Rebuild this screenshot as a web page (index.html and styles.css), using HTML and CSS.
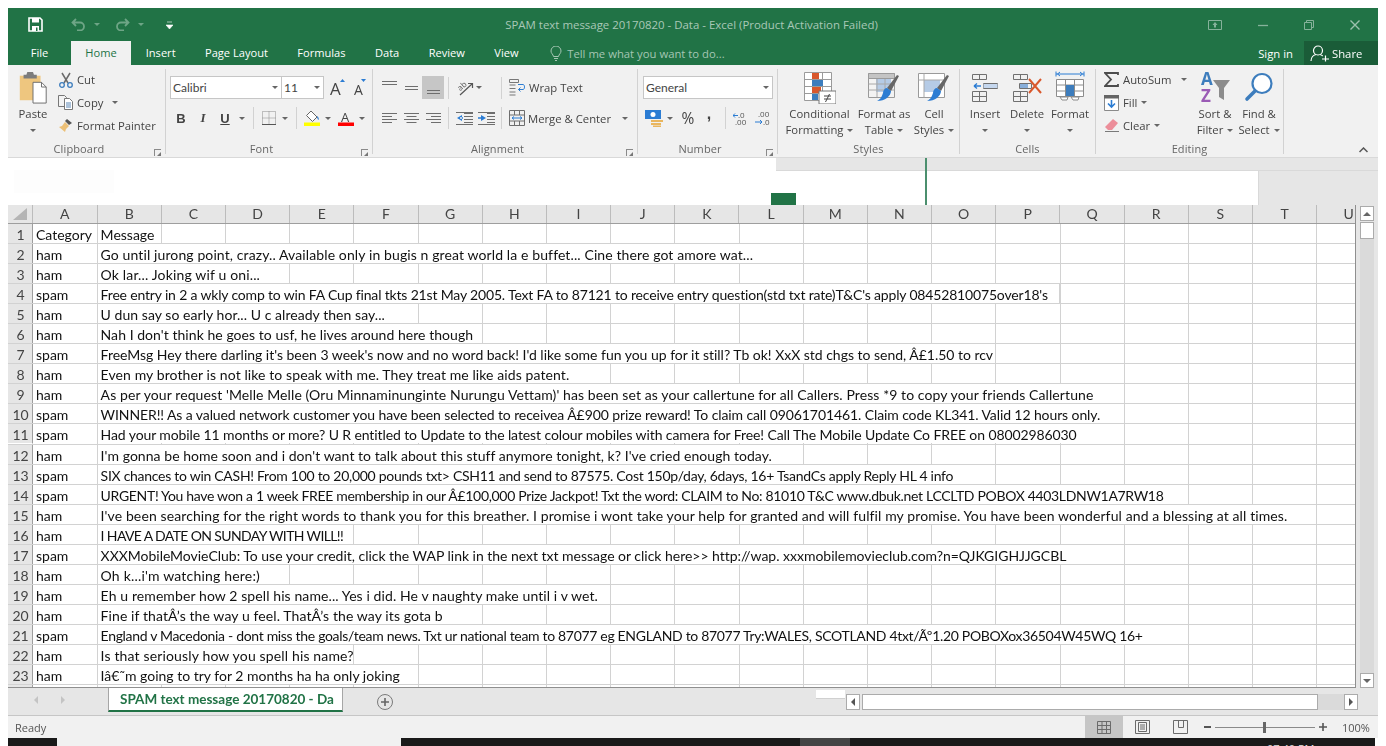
FILE: index.html
```html
<!DOCTYPE html>
<html lang="en">
<head>
<meta charset="utf-8">
<title>SPAM text message 20170820 - Data - Excel</title>
<link rel="stylesheet" href="styles.css">
</head>
<body>
<div class="win">
  <header class="titlebar">
    <div class="qat">
      <svg class="q-save" width="15" height="15" viewBox="0 0 15 15"><path d="M1 1h11l2 2v11H1z" fill="none" stroke="#fff" stroke-width="1.6"/><path d="M4 1h7v4.5H4zM4 9h7v5H4z" fill="#fff"/><path d="M8 10.5h1.5V14H8z" fill="#217346"/></svg>
      <svg class="q-undo" width="15" height="13" viewBox="0 0 15 13"><path d="M5 1 1.5 4.5 5 8M2 4.500h7a4 4 0 0 1 0 8H6" fill="none" stroke="#6ea586" stroke-width="1.800"/></svg>
      <i class="qcar"></i>
      <svg class="q-redo" width="15" height="13" viewBox="0 0 15 13"><path d="M10 1l3.500 3.500L10 8M13 4.500H6a4 4 0 0 0 0 8h3" fill="none" stroke="#6ea586" stroke-width="1.800"/></svg>
      <i class="qcar"></i>
      <svg class="q-cust" width="7" height="8" viewBox="0 0 7 8"><path d="M1 1h5M0 4h7L3.500 8z" fill="#fff" stroke="#fff" stroke-width=".6"/></svg>
    </div>
    <div class="doc-title">SPAM text message 20170820 - Data - Excel (Product Activation Failed)</div>
    <div class="winctl">
      <svg width="14" height="10" viewBox="0 0 14 10"><path d="M.5.500h13v9H.5z" fill="none" stroke="#86b29b"/><path d="M7 2 4.500 5h5zM6 5h2v2.500H6z" fill="#86b29b"/></svg>
      <svg width="10" height="10" viewBox="0 0 10 10"><path d="M0 5.500h10" stroke="#86b29b" stroke-width="1.300"/></svg>
      <svg width="10" height="10" viewBox="0 0 10 10"><path d="M.5 2.500h7v7h-7zM2.500 2.500v-2h7v7h-2" fill="none" stroke="#86b29b"/></svg>
      <svg width="10" height="10" viewBox="0 0 10 10"><path d="M.5.500l9 9M9.500.500l-9 9" stroke="#9cc1ad" stroke-width="1.400"/></svg>
    </div>
  </header>

  <nav class="tabs">
    <span class="tab tab-file">File</span>
    <span class="tab tab-on">Home</span>
    <span class="tab">Insert</span>
    <span class="tab">Page Layout</span>
    <span class="tab">Formulas</span>
    <span class="tab">Data</span>
    <span class="tab">Review</span>
    <span class="tab">View</span>
    <span class="tellme">
      <svg width="12" height="15" viewBox="0 0 12 15"><path d="M3.500 10.500C3 8 1 7.500 1 5a5 5 0 0 1 10 0c0 2.500-2 3-2.500 5.500zM4 12.500h4M5 14.500h2" fill="none" stroke="#a5c6b4"/></svg>
      Tell me what you want to do...
    </span>
    <span class="signin">Sign in</span>
    <span class="share">
      <svg width="20" height="17" viewBox="0 0 20 17"><circle cx="8" cy="5.500" r="4.500" fill="none" stroke="#fff" stroke-width="1.200"/><path d="M1 16c0-3.500 2.500-6 5-6.500M10 9.500c1 .3 2 .8 2.700 1.500M12 14h7M15.500 10.500v6" fill="none" stroke="#fff" stroke-width="1.200"/></svg>
      Share
    </span>
  </nav>

  <section class="ribbon">
    <div class="group g-clip">
      <div class="body flex">
        <div class="big paste">
          <svg width="30" height="35" viewBox="0 0 30 35"><path d="M1 5h22v26H1z" fill="#eec67f"/><path d="M5 4h3l1-3h6l1 3h3v4H5z" fill="#7c7c7c"/><path d="M15 12h9l5 5v17H15z" fill="#fff" stroke="#6a6a6a"/><path d="M24 12v5h5" fill="none" stroke="#6a6a6a"/></svg>
          <span class="big-t">Paste</span>
          <i class="car"></i>
        </div>
        <div class="stack">
          <div class="sm"><svg class="si" width="16" height="16" viewBox="0 0 16 16"><path d="M4 1l6 10M12 1 6 11" stroke="#6b6b6b" stroke-width="1.500"/><circle cx="4" cy="13" r="2.300" fill="none" stroke="#3d7dbd" stroke-width="1.300"/><circle cx="12" cy="13" r="2.300" fill="none" stroke="#3d7dbd" stroke-width="1.300"/></svg><span>Cut</span></div>
          <div class="sm"><svg class="si" width="16" height="15" viewBox="0 0 16 15"><path d="M.5.500h6l2 2v9h-8z" fill="#f3f3f3" stroke="#777"/><path d="M6.500 3.500h5l3 3v8h-8z" fill="#fff" stroke="#777"/><path d="M8 8h5M8 10h5M8 12h5" stroke="#5a86b5"/></svg><span>Copy</span><i class="car w24"></i></div>
          <div class="sm"><svg class="si" width="16" height="15" viewBox="0 0 16 15"><path d="M9 1l5 4-3 2-4-4z" fill="#555"/><path d="M7 4l4 4-3 3-1 3-6-5 3-1z" fill="#ecc077"/></svg><span>Format Painter</span></div>
        </div>
      </div>
      <div class="label lb-launch">Clipboard</div>
      <i class="launch"></i>
    </div>

    <div class="group g-font">
      <div class="body pt7">
        <div class="rw r1">
          <div class="combo c-font"><span>Calibri</span><i class="car"></i></div>
          <div class="combo c-size"><span>11</span><i class="car"></i></div>
          <svg class="ml6" width="16" height="17" viewBox="0 0 16 17"><text x="0" y="16" class="sv-a">A</text><path d="M10 3l2.500-3L15 3z" fill="#2b7cd3"/></svg>
          <svg class="ml8" width="13" height="17" viewBox="0 0 13 17"><text x="0" y="16" class="sv-b">A</text><path d="M7 0h5L9.500 3z" fill="#2b7cd3"/></svg>
        </div>
        <div class="rw r2 pl4">
          <b class="ib w22 b-t">B</b>
          <i class="ib w22 i-t">I</i>
          <u class="ib w22 b-t">U</u>
          <i class="car w12"></i>
          <i class="sep ml5"></i>
          <svg class="ml8" width="14" height="14" viewBox="0 0 14 14"><path d="M.5.500h13v13H.5zM7 .500v13M.5 7h13" fill="none" stroke="#8a8a8a" stroke-dasharray="1 1"/><path d="M0 13.500h14" stroke="#555"/></svg>
          <i class="car w18"></i>
          <i class="sep ml2"></i>
          <svg class="ml7" width="16" height="16" viewBox="0 0 16 16"><path d="M7 1l6 6-4.500 4.500-6-6z" fill="#fff" stroke="#666"/><path d="M13 6c2 1.500 2 3 1.500 4-.8-.5-1.500-2-1.500-4z" fill="#2b7cd3"/><path d="M0 12.500h16v3.500H0z" fill="#ff0"/></svg>
          <i class="car w16"></i>
          <svg class="ml2" width="16" height="16" viewBox="0 0 16 16"><text x="3" y="11.500" class="sv-c">A</text><path d="M0 12.500h16v3.500H0z" fill="#f00"/></svg>
          <i class="car w16"></i>
        </div>
      </div>
      <div class="label lb-launch">Font</div>
      <i class="launch"></i>
    </div>

    <div class="group g-align">
      <div class="body pt7">
        <div class="rw r1 pl5">
          <span class="ib w22"><svg width="15" height="15" viewBox="0 0 15 15"><path d="M0 1.500h15M0 4.500h15" stroke="#6e6e6e"/></svg></span>
          <span class="ib w22"><svg width="15" height="15" viewBox="0 0 15 15"><path d="M1 6.500h13M1 9.500h13" stroke="#6e6e6e"/></svg></span>
          <span class="ib w22 on"><svg width="15" height="15" viewBox="0 0 15 15"><path d="M1 10.500h13M1 13.500h13" stroke="#6e6e6e"/></svg></span>
          <i class="sep ml4"></i>
          <svg class="ml8" width="18" height="16" viewBox="0 0 18 16"><text x="1" y="9" class="sv-d" transform="rotate(-42 5 7)">ab</text><path d="M3 15 15 4M11 3.500l4.500 0 0 4.500" fill="none" stroke="#555" stroke-width="1.200"/></svg>
          <i class="car w7"></i>
          <i class="sep ml19"></i>
          <div class="cmd ml7"><svg width="17" height="17" viewBox="0 0 17 17"><path d="M.5.500h9v3h-9zM.5 6h6M.5 9.500h6M.5 13h6M.5 16h6" fill="none" stroke="#777"/><path d="M9 5.500h5c2 0 2 5 0 5H9.500M11.500 8.500l-2 2 2 2" fill="none" stroke="#2b7cd3"/></svg><span>Wrap Text</span></div>
        </div>
        <div class="rw r2 pl5">
          <span class="ib w22"><svg width="15" height="12" viewBox="0 0 15 12"><path d="M0 1.500h15M0 4.500h10M0 7.500h15M0 10.500h10" stroke="#6e6e6e"/></svg></span>
          <span class="ib w22"><svg width="15" height="12" viewBox="0 0 15 12"><path d="M0 1.500h15M2.500 4.500h10M0 7.500h15M2.500 10.500h10" stroke="#6e6e6e"/></svg></span>
          <span class="ib w22"><svg width="15" height="12" viewBox="0 0 15 12"><path d="M0 1.500h15M5 4.500h10M0 7.500h15M5 10.500h10" stroke="#6e6e6e"/></svg></span>
          <i class="sep ml4"></i>
          <svg class="ml7" width="17" height="13" viewBox="0 0 17 13"><path d="M8 1.500h9M8 4.500h9M8 7.500h9M8 10.500h9M0 12.500h17M0 .500h17" stroke="#6e6e6e"/><path d="M6 3 1 6l5 3zM4 5.200h3v1.600H4z" fill="#2b7cd3"/></svg>
          <svg class="ml5" width="17" height="13" viewBox="0 0 17 13"><path d="M9 1.500h8M9 4.500h8M9 7.500h8M9 10.500h8M0 12.500h17M0 .500h17" stroke="#6e6e6e"/><path d="M3 3l5 3-5 3zM0 5.200h4v1.600H0z" fill="#2b7cd3"/></svg>
          <i class="sep ml6"></i>
          <div class="cmd ml7"><svg width="16" height="16" viewBox="0 0 16 16"><path d="M.5.500h15v15H.5zM.5 5h15M.5 11h15M5.500.500V5M10.500.500V5M5.500 11v4.500M10.500 11v4.500" fill="none" stroke="#6e6e6e"/><path d="M3 8h10M3 8l2-1.500M3 8l2 1.500M13 8l-2-1.500M13 8l-2 1.500" stroke="#2b7cd3" fill="none"/></svg><span>Merge &amp; Center</span><i class="car w22"></i></div>
        </div>
      </div>
      <div class="label lb-launch">Alignment</div>
      <i class="launch"></i>
    </div>

    <div class="group g-num">
      <div class="body pt7">
        <div class="rw r1 pl5">
          <div class="combo c-num"><span>General</span><i class="car"></i></div>
        </div>
        <div class="rw r2 pl7">
          <svg width="18" height="17" viewBox="0 0 18 17"><path d="M0 0h16v9H0z" fill="#2b7cd3"/><circle cx="8" cy="4.500" r="2.500" fill="#fff"/><path d="M6 10h12v2H6zM6 13h10v2H6zM8 15.500h8v1.500H8z" fill="#e9b65f"/></svg>
          <i class="car w14"></i>
          <span class="ib w22 pct">%</span>
          <span class="ib w20 cma">,</span>
          <i class="sep ml6"></i>
          <svg class="ml7" width="17" height="15" viewBox="0 0 17 15"><text x="5" y="7" class="sv-e">.0</text><text x="2" y="14" class="sv-e">.00</text><path d="M0 4.500h5M2 2.500l-2 2 2 2" fill="none" stroke="#2b7cd3"/></svg>
          <svg class="ml5" width="17" height="15" viewBox="0 0 17 15"><text x="3" y="6" class="sv-e">.00</text><text x="8" y="14" class="sv-e">.0</text><path d="M0 11h7M5 9l2 2-2 2" fill="none" stroke="#2b7cd3"/></svg>
        </div>
      </div>
      <div class="label lb-launch">Number</div>
      <i class="launch"></i>
    </div>

    <div class="group g-styles">
      <div class="body flex pl4">
        <div class="big w75">
          <svg width="32" height="33" viewBox="0 0 32 33"><path d="M.5 1.500h27v28H.5zM9.500 1.500v28M18.500 1.500v28M.5 8.500h27M.5 15.500h27M.5 22.500h27" fill="#fff" stroke="#9a9a9a"/><path d="M8 2h7v6H8z" fill="#d9572b"/><path d="M8 9h11v6H8z" fill="#3d7dbd"/><path d="M8 16h9v6H8z" fill="#d9572b"/><path d="M8 23h6v6H8z" fill="#3d7dbd"/><path d="M15 20h17v13H15z" fill="#fff" stroke="#777"/><path d="M20 25h7M20 28h7M25.500 23l-4 8" stroke="#444"/></svg>
          <span class="big-t">Conditional<br>Formatting<i class="icar"></i></span>
        </div>
        <div class="big w54">
          <svg width="32" height="33" viewBox="0 0 32 33"><path d="M.5 2.500h26v24H.5z" fill="#f3f3f3" stroke="#9a9a9a"/><path d="M.5 2.500h26v5H.5z" fill="#c4c4c4" stroke="#9a9a9a"/><path d="M8 8h15v13H8z" fill="#b5cbe6"/><path d="M.5 13h26M.5 19h26M9 8v18M17 8v18" stroke="#a8a8a8" fill="none"/><path d="M31 5l-2-1-10 13 4 3z" fill="#666"/><path d="M19 17l4 3c0 5-6 10-14 10 4-2 5-5 6-8 0-3 2-5 4-5z" fill="#2b7cd3"/></svg>
          <span class="big-t">Format as<br>Table<i class="icar"></i></span>
        </div>
        <div class="big w46">
          <svg width="32" height="33" viewBox="0 0 32 33"><path d="M.5 2.500h26v24H.5z" fill="#fff" stroke="#9a9a9a"/><path d="M6 9h16v12H6z" fill="#b5cbe6"/><path d="M.5 9h26M6 2.500v24" stroke="#a8a8a8" fill="none"/><path d="M31 5l-2-1-10 13 4 3z" fill="#666"/><path d="M19 17l4 3c0 5-6 10-14 10 4-2 5-5 6-8 0-3 2-5 4-5z" fill="#2b7cd3"/></svg>
          <span class="big-t">Cell<br>Styles<i class="icar"></i></span>
        </div>
      </div>
      <div class="label">Styles</div>
    </div>

    <div class="group g-cells">
      <div class="body flex pl4">
        <div class="big w42">
          <svg width="28" height="33" viewBox="0 0 28 33"><path d="M1.500 3.500h14v5h-14zM8.500 3.500v5M12.500 12.500h14v5h-14zM19.500 12.500v5M1.500 20.500h14v10h-14zM1.500 25.500h14M8.500 20.500v10" fill="none" stroke="#707070"/><path d="M12.500 13h14v4h-14z" fill="#c5d7ee"/><path d="M3 15h7M3 15l3-2.500M3 15l3 2.500" fill="none" stroke="#2b7cd3" stroke-width="1.400"/></svg>
          <span class="big-t">Insert</span>
          <i class="car"></i>
        </div>
        <div class="big w42">
          <svg width="30" height="33" viewBox="0 0 30 33"><path d="M1.500 3.500h14v5h-14zM8.500 3.500v5M1.500 20.500h14v10h-14zM1.500 25.500h14M8.500 20.500v10M7.500 12.500h12v5h-12z" fill="none" stroke="#707070"/><path d="M8 13h8v4H8z" fill="#88aed9"/><path d="M17 8l12 14M29 8 17 22" stroke="#d9572b" stroke-width="2"/></svg>
          <span class="big-t">Delete</span>
          <i class="car"></i>
        </div>
        <div class="big w44">
          <svg width="30" height="33" viewBox="0 0 30 33"><path d="M1 3h28M1 .5v5M29 .5v5" stroke="#2b7cd3" fill="none"/><path d="M5 1l-2.500 2L5 5M25 1l2.500 2L25 5" fill="none" stroke="#2b7cd3"/><path d="M1.500 8.500h27v17h-27zM10.500 8.500v17M19.500 8.500v17M1.500 14h27M1.500 20h27" fill="#fff" stroke="#8c8c8c"/><path d="M11 14h8v11h-8z" fill="#3d7dbd"/><path d="M5 26h8l-1 3H7zM16 26h8l-1 3h-5z" fill="#fff" stroke="#8c8c8c"/></svg>
          <span class="big-t">Format</span>
          <i class="car"></i>
        </div>
      </div>
      <div class="label">Cells</div>
    </div>

    <div class="group g-edit">
      <div class="body flex pl8">
        <div class="stack w88">
          <div class="sm"><svg class="si2" width="15" height="15" viewBox="0 0 15 15"><path d="M14 3V1H1l6 6.500L1 14h13v-2" fill="none" stroke="#4d4d4d" stroke-width="1.800"/></svg><span>AutoSum</span><i class="car w26"></i></div>
          <div class="sm"><svg class="si2" width="15" height="16" viewBox="0 0 15 16"><path d="M.5.500h14v15H.5z" fill="#fff" stroke="#8a8a8a"/><path d="M0 0h15v3.500H0z" fill="#666"/><path d="M7.500 5v7M4 8.500l3.500 3.500L11 8.500" fill="none" stroke="#2b7cd3" stroke-width="1.600"/></svg><span>Fill</span><i class="icar"></i></div>
          <div class="sm"><svg class="si2" width="15" height="15" viewBox="0 0 15 15"><path d="M9 1l5 4-6 7H4L1 9z" fill="#ec8e9a"/><path d="M1 13.500h14" stroke="#7a7a7a"/></svg><span>Clear</span><i class="icar"></i></div>
        </div>
        <div class="big w46">
          <svg width="32" height="33" viewBox="0 0 32 33"><text x="2" y="14" class="sv-az1">A</text><text x="2" y="31" class="sv-az2">Z</text><path d="M14 9h17l-6 8v12l-5-3v-9z" fill="#8c8c8c"/></svg>
          <span class="big-t">Sort &amp;<br>Filter<i class="icar"></i></span>
        </div>
        <div class="big w42">
          <svg width="30" height="33" viewBox="0 0 30 33"><circle cx="18" cy="12.500" r="9.500" fill="#fff" stroke="#3d7dbd" stroke-width="2.200"/><path d="M11 20l-8 8" stroke="#3d7dbd" stroke-width="3.600" stroke-linecap="round"/></svg>
          <span class="big-t">Find &amp;<br>Select<i class="icar"></i></span>
        </div>
      </div>
      <div class="label">Editing</div>
    </div>
    <svg class="collapse" width="9" height="6" viewBox="0 0 9 6"><path d="M.5 5l4-4 4 4" fill="none" stroke="#555" stroke-width="1.500"/></svg>
  </section>

  <section class="fbar">
    <div class="fb-left"><i class="fb-ghost"></i></div>
    <div class="fb-right">
      <div class="fb-strip"></div>
      <div class="fb-low"><div class="fb-input"></div><div class="fb-end"></div></div>
    </div>
    <i class="fb-green"></i>
    <i class="fb-line"></i>
  </section>

  <section class="sheet">
    <div class="grid">
      <div class="hdr">
        <div class="corner"><svg width="16" height="14" viewBox="0 0 16 14"><path d="M15 1v12H1z" fill="#b5b5b5"/></svg></div>
        <div class="ch">A</div><div class="ch">B</div><div class="ch">C</div><div class="ch">D</div><div class="ch">E</div><div class="ch">F</div><div class="ch">G</div><div class="ch">H</div><div class="ch">I</div><div class="ch">J</div><div class="ch">K</div><div class="ch">L</div><div class="ch">M</div><div class="ch">N</div><div class="ch">O</div><div class="ch">P</div><div class="ch">Q</div><div class="ch">R</div><div class="ch">S</div><div class="ch">T</div><div class="ch">U</div>
      </div>
      <div class="row"><div class="rh">1</div><div class="c ca">Category</div><div class="c s1">Message</div></div>
      <div class="row"><div class="rh">2</div><div class="c ca">ham</div><div class="c s11 lp11">Go until jurong point, crazy.. Available only in bugis n great world la e buffet... Cine there got amore wat...</div></div>
      <div class="row"><div class="rh">3</div><div class="c ca">ham</div><div class="c s3 lp15">Ok lar... Joking wif u oni...</div></div>
      <div class="row"><div class="rh">4</div><div class="c ca">spam</div><div class="c s15 ln17">Free entry in 2 a wkly comp to win FA Cup final tkts 21st May 2005. Text FA to 87121 to receive entry question(std txt rate)T&amp;C's apply 08452810075over18's</div></div>
      <div class="row"><div class="rh">5</div><div class="c ca">ham</div><div class="c s5 lp05">U dun say so early hor... U c already then say...</div></div>
      <div class="row"><div class="rh">6</div><div class="c ca">ham</div><div class="c s6 lp05">Nah I don't think he goes to usf, he lives around here though</div></div>
      <div class="row"><div class="rh">7</div><div class="c ca">spam</div><div class="c s14 ln02">FreeMsg Hey there darling it's been 3 week's now and no word back! I'd like some fun you up for it still? Tb ok! XxX std chgs to send, Â£1.50 to rcv</div></div>
      <div class="row"><div class="rh">8</div><div class="c ca">ham</div><div class="c s8 lp09">Even my brother is not like to speak with me. They treat me like aids patent.</div></div>
      <div class="row"><div class="rh">9</div><div class="c ca">ham</div><div class="c s16 lp09">As per your request 'Melle Melle (Oru Minnaminunginte Nurungu Vettam)' has been set as your callertune for all Callers. Press *9 to copy your friends Callertune</div></div>
      <div class="row"><div class="rh">10</div><div class="c ca">spam</div><div class="c s16 ln10">WINNER!! As a valued network customer you have been selected to receivea Â£900 prize reward! To claim call 09061701461. Claim code KL341. Valid 12 hours only.</div></div>
      <div class="row"><div class="rh">11</div><div class="c ca">spam</div><div class="c s16 ln10">Had your mobile 11 months or more? U R entitled to Update to the latest colour mobiles with camera for Free! Call The Mobile Update Co FREE on 08002986030</div></div>
      <div class="row"><div class="rh">12</div><div class="c ca">ham</div><div class="c s11 lp05">I'm gonna be home soon and i don't want to talk about this stuff anymore tonight, k? I've cried enough today.</div></div>
      <div class="row"><div class="rh">13</div><div class="c ca">spam</div><div class="c s14 ln28">SIX chances to win CASH! From 100 to 20,000 pounds txt&gt; CSH11 and send to 87575. Cost 150p/day, 6days, 16+ TsandCs apply Reply HL 4 info</div></div>
      <div class="row"><div class="rh">14</div><div class="c ca">spam</div><div class="c s17 ln32">URGENT! You have won a 1 week FREE membership in our Â£100,000 Prize Jackpot! Txt the word: CLAIM to No: 81010 T&amp;C www.dbuk.net LCCLTD POBOX 4403LDNW1A7RW18</div></div>
      <div class="row"><div class="rh">15</div><div class="c ca">ham</div><div class="c s19 lp11">I've been searching for the right words to thank you for this breather. I promise i wont take your help for granted and will fulfil my promise. You have been wonderful and a blessing at all times.</div></div>
      <div class="row"><div class="rh">16</div><div class="c ca">ham</div><div class="c s4 ln63">I HAVE A DATE ON SUNDAY WITH WILL!!</div></div>
      <div class="row"><div class="rh">17</div><div class="c ca">spam</div><div class="c s16 ln02">XXXMobileMovieClub: To use your credit, click the WAP link in the next txt message or click here&gt;&gt; http://wap. xxxmobilemovieclub.com?n=QJKGIGHJJGCBL</div></div>
      <div class="row"><div class="rh">18</div><div class="c ca">ham</div><div class="c s3 lp19">Oh k...i'm watching here:)</div></div>
      <div class="row"><div class="rh">19</div><div class="c ca">ham</div><div class="c s8 lp09">Eh u remember how 2 spell his name... Yes i did. He v naughty make until i v wet.</div></div>
      <div class="row"><div class="rh">20</div><div class="c ca">ham</div><div class="c s6 lp09">Fine if thatÂ’s the way u feel. ThatÂ’s the way its gota b</div></div>
      <div class="row"><div class="rh">21</div><div class="c ca">spam</div><div class="c s17 ln32">England v Macedonia - dont miss the goals/team news. Txt ur national team to 87077 eg ENGLAND to 87077 Try:WALES, SCOTLAND 4txt/Ãº1.20 POBOXox36504W45WQ 16+</div></div>
      <div class="row"><div class="rh">22</div><div class="c ca">ham</div><div class="c s4 lp15">Is that seriously how you spell his name?</div></div>
      <div class="row"><div class="rh">23</div><div class="c ca">ham</div><div class="c s5">Iâ€˜m going to try for 2 months ha ha only joking</div></div>
      <div class="row"><div class="rh"></div><div class="c ca"></div></div>
    </div>
    <div class="vbar">
      <div class="sb-btn"><i class="tri-up"></i></div>
      <div class="sb-thumb"></div>
      <div class="sb-track"></div>
      <div class="sb-btn"><i class="tri-down"></i></div>
    </div>
  </section>

  <section class="sheettabs">
    <div class="nav-arrows"><i class="tri-l"></i><i class="tri-r"></i></div>
    <div class="stab">SPAM text message 20170820 - Da</div>
    <svg class="addsheet" width="18" height="18" viewBox="0 0 18 18"><circle cx="9" cy="9" r="7.500" fill="none" stroke="#7a7a7a"/><path d="M9 5v8M5 9h8" stroke="#666" stroke-width="1.600"/></svg>
    <div class="split"></div>
    <div class="hbar">
      <div class="sb-btn hb"><i class="tri-l2"></i></div>
      <div class="hthumb"></div>
      <div class="htrack"></div>
      <div class="sb-btn hb"><i class="tri-r2"></i></div>
    </div>
  </section>

  <footer class="status">
    <span class="ready">Ready</span>
    <div class="views">
      <span class="vw vw-on"><svg width="14" height="13" viewBox="0 0 14 13"><path d="M.5.500h13v12H.5zM.5 4.500h13M.5 8.500h13M5 .500v12M9.500.500v12" fill="none" stroke="#6b6b6b"/></svg></span>
      <span class="vw"><svg width="15" height="14" viewBox="0 0 15 14"><path d="M.5.500h14v13H.5z" fill="none" stroke="#6b6b6b"/><path d="M3.500 2.500h8v9h-8zM5 5h5M5 7h5M5 9h5" fill="none" stroke="#6b6b6b"/></svg></span>
      <span class="vw"><svg width="15" height="14" viewBox="0 0 15 14"><path d="M.5.500h14v13H.5zM5.500.500v7h5v-7" fill="none" stroke="#6b6b6b"/></svg></span>
    </div>
    <div class="zoomer">
      <i class="z-minus"></i>
      <div class="z-track"><i class="z-handle"></i></div>
      <svg width="8" height="8" viewBox="0 0 8 8"><path d="M0 4h8M4 0v8" stroke="#555" stroke-width="1.600"/></svg>
      <span class="z-val">100%</span>
    </div>
  </footer>
</div>
<div class="taskbar">
  <i class="tb-search"></i>
  <i class="tb-app"></i>
  <span class="tb-time">07:40 PM</span>
</div>
</body>
</html>
```
FILE: styles.css
```css
* { box-sizing: border-box; }
html, body { margin: 0; padding: 0; }
body {
  width: 1386px; height: 746px; overflow: hidden; background: #fff;
  font-family: "Open Sans", "Liberation Sans", sans-serif; font-size: 11.3px; color: #444;
}
i { font-style: normal; }
.win { width: 1370px; margin: 8px 8px 0; filter: blur(.3px); }

.titlebar { height: 33px; background: #217346; display: grid; grid-template-columns: 1fr auto 1fr; align-items: center; }
.qat { display: flex; align-items: center; padding-left: 20px; }
.q-undo { margin-left: 28px; }
.q-redo { margin-left: 15px; }
.q-cust { margin-left: 22px; }
.qcar { width: 0; height: 0; margin-left: 8px; border: 3px solid transparent; border-top-color: #6ea586; border-bottom: 0; }
.doc-title { color: #a9c8b7; font-size: 11.45px; text-align: center; margin-right: 3px; }
.winctl { display: flex; justify-content: flex-end; align-items: center; gap: 36px; padding-right: 18px; }

.tabs { height: 24px; background: #217346; display: flex; align-items: center; color: #fff; font-size: 11.1px; }
.tab { padding: 0 14.7px; line-height: 24px; height: 24px; }
.tab-file { width: 63px; text-align: center; padding: 0; }
.tab-on { width: 60px; padding: 0; text-align: center; background: #f1f1f1; color: #217346; }
.tellme { display: flex; align-items: center; gap: 5px; margin-left: 17px; color: #a5c6b4; font-size: 11.3px; }
.signin { margin-left: auto; margin-right: 11px; font-size: 11.3px; }
.share { width: 74px; height: 24px; background: #1a5c38; display: flex; align-items: center; gap: 2px; padding-left: 6px; font-size: 11.3px; }

.ribbon { height: 93px; background: #f1f1f1; border-bottom: 1px solid #d9d9d9; display: flex; padding-top: 4px; position: relative; }
.group { height: 85px; border-right: 1px solid #d2d2d2; position: relative; flex: none; }
.g-clip { width: 158px; } .g-font { width: 207px; } .g-align { width: 265px; } .g-num { width: 140px; }
.g-styles { width: 182px; } .g-cells { width: 136px; } .g-edit { width: 188px; }
.body { height: 71px; }
.flex { display: flex; }
.label { height: 18px; line-height: 18px; text-align: center; color: #666; font-size: 11px; letter-spacing: .1px; }
.lb-launch { padding-right: 15px; }
.launch { position: absolute; right: 4px; bottom: -2px; width: 7px; height: 7px; border: 1px solid #8a8a8a; border-width: 1px 0 0 1px; }
.launch::after { content: ""; position: absolute; right: 0; bottom: 0; border: 2px solid #777; border-color: transparent #777 #777 transparent; }
.collapse { position: absolute; left: 1351px; top: 82px; }

.big { display: flex; flex-direction: column; align-items: center; padding-top: 2px; flex: none; }
.big > svg { height: 33px; margin-bottom: 2px; }
.big-t { line-height: 16px; text-align: center; color: #444; white-space: nowrap; }
.big > .car { height: 16px; }
.paste { width: 44px; margin-left: 3px; }
.w75 { width: 75px; } .w54 { width: 54px; } .w46 { width: 46px; } .w42 { width: 42px; } .w44 { width: 44px; } .w88 { width: 88px; }

.stack { display: flex; flex-direction: column; margin: -1px 0 0 3px; }
.w88.stack { margin-left: 0; }
.sm { height: 23px; display: flex; align-items: center; white-space: nowrap; }
.si { margin-right: 3px; flex: none; width: 16px; }
.si2 { margin-right: 4px; flex: none; }

.car { display: flex; align-items: center; justify-content: center; width: 12px; flex: none; }
.car::after { content: ""; border: 3px solid transparent; border-top-color: #666; border-bottom: 0; }
.icar { display: inline-block; vertical-align: middle; margin-left: 4px; border: 3px solid transparent; border-top-color: #666; border-bottom: 0; }
.w7 { width: 7px; } .w12 { width: 12px; } .w14 { width: 14px; } .w16 { width: 16px; } .w18 { width: 18px; } .w20 { width: 20px; } .w22 { width: 22px; } .w24 { width: 24px; } .w26 { width: 26px; }

.pt7 { padding-top: 7px; }
.pl4 { padding-left: 4px; } .pl5 { padding-left: 5px; } .pl7 { padding-left: 7px; } .pl8 { padding-left: 8px; }
.ml2 { margin-left: 2px; } .ml4 { margin-left: 4px; } .ml5 { margin-left: 5px; } .ml6 { margin-left: 6px; } .ml7 { margin-left: 7px; } .ml8 { margin-left: 8px; } .ml19 { margin-left: 19px; }
.rw { display: flex; align-items: center; }
.r1 { height: 23px; margin-bottom: 8px; }
.r2 { height: 22px; }
.ib { display: flex; align-items: center; justify-content: center; height: 22px; flex: none; font-style: normal; }
.r1 .ib { height: 23px; }
.on { background: #c6c6c6; }
.sep { width: 1px; height: 22px; background: #d2d2d2; flex: none; }
.b-t { font-family: "Liberation Sans", sans-serif; font-size: 13px; font-weight: 700; color: #444; }
.i-t { font-family: "Liberation Serif", serif; font-size: 13px; font-weight: 700; font-style: italic; color: #444; }
.pct { font-size: 15.5px; }
.cma { font-family: "Liberation Sans", sans-serif; font-size: 16px; font-weight: 700; padding-bottom: 9px; }
.cmd { display: flex; align-items: center; gap: 3px; white-space: nowrap; }
.cmd svg { flex: none; }

.combo { height: 23px; background: #fff; border: 1px solid #c6c6c6; display: flex; align-items: center; justify-content: space-between; padding-left: 2px; flex: none; font-size: 12px; }
.c-font { width: 112px; margin-left: 4px; font-family: "Lato", sans-serif; }
.c-size { width: 43px; margin-left: -1px; font-family: "Lato", sans-serif; }
.c-num { width: 130px; font-family: "Lato", sans-serif; }
.sv-a { font: 400 17px "Open Sans", sans-serif; fill: #444; }
.sv-b { font: 400 14px "Open Sans", sans-serif; fill: #444; }
.sv-c { font: 400 13px "Open Sans", sans-serif; fill: #444; }
.sv-d { font: 400 8px "Open Sans", sans-serif; fill: #555; }
.sv-e { font: 400 8px "Open Sans", sans-serif; fill: #555; }
.sv-az1 { font: 700 17px "Open Sans", sans-serif; fill: #3d7dbd; }
.sv-az2 { font: 700 17px "Open Sans", sans-serif; fill: #9a5bb5; }

.fbar { height: 47px; display: flex; position: relative; background: #fff; }
.fb-left { width: 768px; flex: none; }
.fb-right { flex: 1; display: flex; flex-direction: column; }
.fb-strip { height: 13px; background: #e6e6e6; border-bottom: 1px solid #d9d9d9; }
.fb-low { flex: 1; display: flex; }
.fb-input { width: 482px; background: #fff; }
.fb-end { flex: 1; background: #e6e6e6; border-left: 1px solid #d9d9d9; }
.fb-ghost { position: absolute; left: 6px; top: 12px; width: 100px; height: 23px; background: #fdfdfd; }
.fb-green { position: absolute; left: 763px; top: 35px; width: 25px; height: 12px; background: #217346; }
.fb-line { position: absolute; left: 917px; top: 0; width: 2px; height: 47px; background: #4b8f6e; }

.sheet { height: 483px; display: flex; }
.grid { width: 1348px; overflow: hidden; background: #fff; border-bottom: 1px solid #8f8f8f; border-right: 1px solid #8f8f8f; font-family: "Lato", "Liberation Sans", sans-serif; font-size: 14px; color: #111; }
.hdr { display: grid; grid-template-columns: 25px 64.6px repeat(20, 64.2px); height: 19px; background: #e6e6e6; border-bottom: 1px solid #9e9e9e; width: 1400px; }
.corner { display: flex; justify-content: center; align-items: center; border-right: 1px solid #bcbcbc; }
.ch { text-align: center; line-height: 17px; border-right: 1px solid #bcbcbc; color: #444; }
.row {
  display: grid; grid-template-columns: 25px 64.6px repeat(20, 64.2px); grid-auto-rows: 19px; height: 20.05px; width: 1400px;
  border-bottom: 1px solid #d2d2d2;
  background: repeating-linear-gradient(90deg, transparent 0 24.4px, #d2d2d2 24.4px 25.4px, transparent 25.4px 64.2px);
}
.rh { background: #e6e6e6; border-right: 1px solid #9e9e9e; text-align: center; line-height: 21px; color: #444; padding-left: 1px; }
.c { background: #fff; border-right: 1px solid #d2d2d2; line-height: 21px; padding-left: 3px; white-space: nowrap; color: #111; }
.ca { padding-left: 3px; }
.s1 { grid-column: span 1; } .s2 { grid-column: span 2; } .s3 { grid-column: span 3; } .s4 { grid-column: span 4; } .s5 { grid-column: span 5; }
.s6 { grid-column: span 6; } .s8 { grid-column: span 8; } .s11 { grid-column: span 11; } .s14 { grid-column: span 14; } .s15 { grid-column: span 15; }
.s16 { grid-column: span 16; } .s17 { grid-column: span 17; } .s19 { grid-column: span 19; }
.lp19 { letter-spacing: .19px; } .lp15 { letter-spacing: .15px; } .lp11 { letter-spacing: .11px; } .lp09 { letter-spacing: .095px; } .lp05 { letter-spacing: .05px; }
.ln02 { letter-spacing: -.02px; } .ln10 { letter-spacing: -.1px; } .ln17 { letter-spacing: -.17px; } .ln28 { letter-spacing: -.28px; } .ln32 { letter-spacing: -.32px; } .ln63 { letter-spacing: -.63px; }

.vbar { flex: 1; background: #e6e6e6; padding: 1px 4px 0; display: flex; flex-direction: column; }
.sb-btn { width: 14px; height: 15px; background: #fff; border: 1px solid #ababab; display: flex; align-items: center; justify-content: center; flex: none; }
.sb-thumb { height: 17px; margin-top: 1px; background: #fff; border: 1px solid #ababab; flex: none; }
.sb-track { flex: 1; background: #dadada; }
.tri-up { border: 4px solid transparent; border-bottom-color: #666; border-top: 0; }
.tri-down { border: 4px solid transparent; border-top-color: #666; border-bottom: 0; }

.sheettabs { height: 28px; background: #e6e6e6; display: flex; border-bottom: 1px solid #c6c6c6; position: relative; }
.nav-arrows { width: 100px; flex: none; display: flex; gap: 23px; align-items: center; padding: 0 0 4px 26px; }
.tri-l { border: 4px solid transparent; border-right-color: #c4c4c4; border-left: 0; }
.tri-r { border: 4px solid transparent; border-left-color: #c4c4c4; border-right: 0; }
.stab { width: 235px; height: 24px; background: #fff; border: 1px solid #a6a6a6; border-width: 0 1px; border-bottom: 2px solid #217346; color: #217346; font: 700 13.5px/23px "Lato", sans-serif; padding-left: 11px; white-space: nowrap; overflow: hidden; flex: none; }
.addsheet { margin: 5px 0 0 33px; flex: none; }
.split { width: 29px; height: 9px; margin: 2px 0 0 422px; background: #fff; border-bottom: 1px solid #d0d0d0; flex: none; }
.hbar { margin-left: 1px; margin-top: 6px; width: 512px; height: 16px; display: flex; flex: none; }
.hb { height: 16px; }
.hthumb { width: 456px; margin-left: 2px; background: #fff; border: 1px solid #ababab; }
.htrack { flex: 1; background: #dadada; }
.tri-l2 { border: 4px solid transparent; border-right-color: #555; border-left: 0; }
.tri-r2 { border: 4px solid transparent; border-left-color: #555; border-right: 0; }

.status { height: 22px; background: #f1f1f1; display: flex; align-items: center; font-size: 11px; color: #555; }
.ready { margin-left: 7px; }
.views { margin-left: auto; display: flex; height: 22px; }
.vw { width: 38px; display: flex; align-items: center; justify-content: center; }
.vw-on { background: #c6c6c6; }
.zoomer { display: flex; align-items: center; margin-left: 5px; width: 174px; }
.z-minus { width: 7px; height: 2px; background: #555; flex: none; }
.z-track { width: 100px; height: 1px; background: #8a8a8a; margin: 0 4px; position: relative; flex: none; }
.z-handle { position: absolute; left: 48px; top: -5px; width: 3px; height: 11px; background: #666; }
.z-val { margin-left: 15px; }

.taskbar { width: 1367px; height: 8px; margin-left: 8px; background: #1a1a1a; display: flex; overflow: hidden; position: relative; }
.tb-search { width: 344px; height: 8px; margin-left: 49px; background: #f1f1f1; flex: none; }
.tb-app { width: 50px; height: 8px; margin-left: 399px; background: #444; flex: none; }
.tb-time { position: absolute; left: 1259px; top: 4px; color: #ddd; font-size: 11px; line-height: 14px; }
```
